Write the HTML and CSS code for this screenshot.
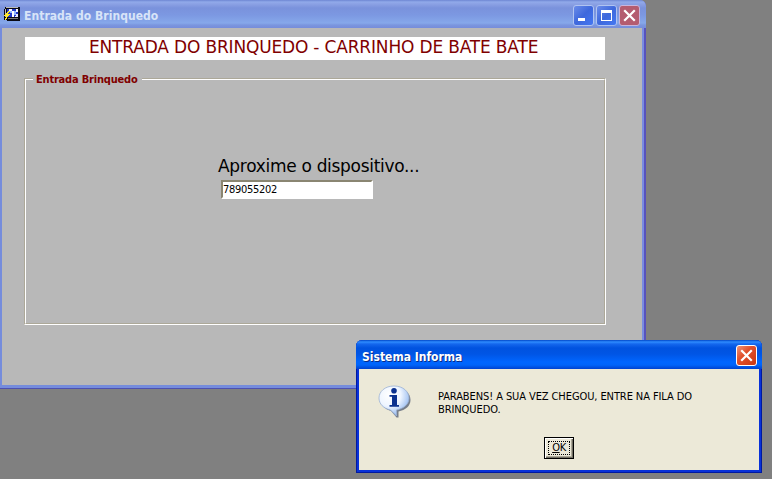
FILE: index.html
```html
<!DOCTYPE html>
<html lang="pt-BR">
<head>
<meta charset="utf-8">
<title>Entrada do Brinquedo</title>
<link rel="stylesheet" href="styles.css">
</head>
<body>
<main class="desktop">
  <section class="window">
    <header class="titlebar">
      <svg class="app-icon" viewBox="0 0 16 16" shape-rendering="crispEdges">
        <path d="M1 1h15v14H3v-1H0V3h1z" fill="#0a0a14"/>
        <path d="M2 1h12v1H2zM1 3h1v8H1z" fill="#b9b9b9"/>
        <path d="M3 3h11v8H3z" fill="#2338c8"/>
        <path d="M5 3h3v2H5zM8 5h2v6H8zM12 3h2v3h-2z" fill="#fff"/>
        <path d="M6 5h2v2H6zM10 5h2v4h-2z" fill="#8fb6ff"/>
        <path d="M12 8h2v3h-3v-1h1z" fill="#e8e8ff"/>
        <path d="M4 12h10v1H4z" fill="#777"/>
        <path d="M4 5h2v1H5v1H4v1h2v1H5v1H4v1H3v2H2v1H1v-2h1v-2H0V9h1V8h1V7h1V6h1z" fill="#ffe928"/>
      </svg>
      <h1 class="title">Entrada do Brinquedo</h1>
      <div class="controls">
        <svg class="control" viewBox="0 0 21 21"><rect x=".5" y=".5" width="20" height="20" rx="2.5" fill="url(#b)" stroke="#b1c4f1"/><path d="M5 13h7v3H5z" fill="#fff"/></svg>
        <svg class="control" viewBox="0 0 21 21"><rect x=".5" y=".5" width="20" height="20" rx="2.5" fill="url(#b)" stroke="#b1c4f1"/><path d="M5 5h11v11H5zM6 8v7h9V8z" fill="#fff" fill-rule="evenodd"/></svg>
        <svg class="control" viewBox="0 0 21 21"><rect x=".5" y=".5" width="20" height="20" rx="2.5" fill="#b45c70" stroke="#c9b5dc"/><path d="M6 6l9 9M15 6l-9 9" stroke="#fff" stroke-width="2.2" stroke-linecap="square"/></svg>
      </div>
    </header>
    <div class="form">
      <h2 class="banner"><span>ENTRADA DO BRINQUEDO - CARRINHO DE BATE BATE</span></h2>
      <div class="group">
        <div class="group-inner">
          <div class="legend"><span>Entrada Brinquedo</span></div>
          <label class="prompt" for="device">Aproxime o dispositivo...</label>
          <input class="field" id="device" value="789055202">
        </div>
      </div>
    </div>
  </section>

  <section class="dialog">
    <header class="dialog-title">
      <h2 class="dialog-name">Sistema Informa</h2>
      <svg class="control" viewBox="0 0 21 21"><rect x=".5" y=".5" width="20" height="20" rx="2.5" fill="url(#r)" stroke="#fff"/><path d="M6 6l9 9M15 6l-9 9" stroke="#fff" stroke-width="2.2" stroke-linecap="square"/></svg>
    </header>
    <div class="dialog-body">
      <div class="message">
        <svg class="info" viewBox="0 0 34 34">
          <path d="M17 2.500C9 2.500 3 8 3 14.500c0 6 4.500 10 10 11.500l5.500 6.500h2V26.500C27.500 25 32.500 21 32.500 15 32.500 8 26 2.500 17 2.500z" fill="#4f5a70" opacity=".75"/>
          <path d="M16 1C7 1 1 6.500 1 13c0 6 4.500 10.500 11.500 12l6 6V25C26 23.500 31 19 31 13 31 6.500 25 1 16 1z" fill="url(#g)" stroke="#9bb1d3" stroke-width=".8"/>
          <circle cx="16" cy="5.700" r="2.800" fill="#0b318f"/>
          <path d="M11.500 10h7.500v10h2v1.700h-9.500V20H14v-8.300h-2.500z" fill="#0b318f"/>
        </svg>
        <p class="text"><span class="line one">PARABENS! A SUA VEZ CHEGOU, ENTRE NA FILA DO</span><span class="line two">BRINQUEDO.</span></p>
      </div>
      <button class="ok"><span><u>O</u>K</span></button>
    </div>
  </section>
</main>
<svg class="defs">
  <defs>
    <linearGradient id="b" x2="1" y2="1"><stop stop-color="#6d8eea"/><stop offset=".5" stop-color="#3e68dc"/><stop offset="1" stop-color="#4578f3"/></linearGradient>
    <linearGradient id="r" x2="1" y2="1"><stop stop-color="#ef987c"/><stop offset=".4" stop-color="#e1512d"/><stop offset="1" stop-color="#ca3510"/></linearGradient>
    <radialGradient id="g" cx=".35" cy=".3" r=".75"><stop stop-color="#fff"/><stop offset=".5" stop-color="#eef5ff"/><stop offset="1" stop-color="#8db4ee"/></radialGradient>
  </defs>
</svg>
</body>
</html>
```
FILE: styles.css
```css
* { box-sizing: border-box; margin: 0; padding: 0; }
body {
  width: 772px; height: 479px; overflow: hidden;
  background: #808080;
  font-family: "DejaVu Sans Condensed", "DejaVu Sans", sans-serif;
  color: #000;
}
.desktop { position: relative; width: 772px; height: 479px; }
.defs { position: absolute; width: 0; height: 0; }
.window {
  position: absolute; left: 0; top: 0; width: 646px; height: 389px;
  background: linear-gradient(90deg, #758cdc 0 642px, #7a8ce0 642px 644px, #5752bd 644px);
  border-bottom: 1px solid #4d50ae;
  border-radius: 0 6px 0 0;
  padding: 0 4px 3px 2px;
}
.titlebar {
  display: flex; align-items: center; height: 28px; margin: 0 -4px 0 -2px;
  padding: 2px 6px 0 4px; border-radius: 0 6px 0 0;
  background: linear-gradient(#6e86d3 0, #91aaea 2px, #8ba1e4 4px, #7a92dc 8px, #7c98e2 15px, #86a8ea 23px, #7b96df 25px, #768dda 28px);
}
.app-icon { width: 16px; height: 16px; margin-top: -2px; }
.title {
  flex: 1; margin-left: 4px; padding-top: 1px; white-space: nowrap;
  font: bold 12px/16px "DejaVu Sans Condensed", "DejaVu Sans", sans-serif;
  letter-spacing: .05px; color: #d8e4f8;
}
.controls { display: flex; gap: 2px; }
.control { display: block; width: 21px; height: 21px; }
.form { height: 357px; padding: 9px 37px 0 22px; background: #b8b8b8; }
.banner {
  width: 580px; height: 23px; margin-left: 1px; padding-left: 64px;
  background: #fff; color: #800000; white-space: nowrap;
  font: 17px/21px "DejaVu Sans", sans-serif; letter-spacing: -.17px;
}
.group { width: 582px; height: 247px; margin-top: 18px; border: 1px solid; border-color: #aca899 #fff #fff #aca899; }
.group-inner {
  display: flex; flex-direction: column; align-items: flex-start; height: 245px;
  border: 1px solid; border-color: #fff #aca899 #aca899 #fff;
}
.legend {
  margin: -8px 0 0 7px; height: 14px; width: 109px; padding-left: 3px;
  background: #b8b8b8; color: #800000; white-space: nowrap;
  font: bold 11px/15px "DejaVu Sans Condensed", "DejaVu Sans", sans-serif; letter-spacing: -.2px;
}
.prompt {
  margin: 70px 0 0 192px; height: 24px; white-space: nowrap;
  font: 17px/21px "DejaVu Sans", sans-serif; letter-spacing: -.3px;
}
.field {
  width: 152px; height: 19px; margin-left: 195px; outline: 0; background: #fff; color: #000;
  border: 2px solid; border-color: #8a8672 #fff #fff #8a8672;
  font: 11px/14px "DejaVu Sans Condensed", "DejaVu Sans", sans-serif; letter-spacing: -.3px;
}
.dialog {
  position: absolute; left: 356px; top: 340px; width: 406px; height: 133px;
  padding: 0 3px 3px; border-radius: 6px 6px 0 0;
  background: #0831d9; box-shadow: inset 1px -1px #0019a0, inset -1px 0 #0019a0;
}
.dialog-title {
  display: flex; justify-content: space-between; height: 29px; margin: 0 -3px;
  padding: 5px 5px 0 6px; border-radius: 6px 6px 0 0;
  background: linear-gradient(#0046c8 0, #2e8cff 2px, #1467ed 4px, #0052df 8px, #0055e5 14px, #0066ff 22px, #0064fa 25px, #0042cf 29px);
}
.dialog-name {
  color: #fff; white-space: nowrap; text-shadow: 1px 1px #0b2c85;
  font: bold 12px/24px "DejaVu Sans Condensed", "DejaVu Sans", sans-serif;
}
.dialog-body { display: flex; flex-direction: column; height: 101px; background: #ece9d8; }
.message { display: flex; height: 68px; padding: 16px 0 0 19px; }
.info { width: 34px; height: 34px; flex: none; }
.text { margin: 5px 0 0 26px; font-size: 11px; line-height: 13px; letter-spacing: -.09px; }
.line { display: block; white-space: nowrap; width: max-content; }
.ok {
  width: 30px; height: 22px; margin-left: 185px; padding: 2px; color: #000;
  background: #ece9d8; border: 1px solid #000;
  box-shadow: inset 1px 1px #fff, inset -1px -1px #716f64, inset -2px -2px #aca899;
}
.ok span {
  display: block; width: 22px; height: 14px; margin: 1px; border: 1px dotted #000;
  font: 11px/12px "DejaVu Sans Condensed", "DejaVu Sans", sans-serif; letter-spacing: -.3px;
}
```
